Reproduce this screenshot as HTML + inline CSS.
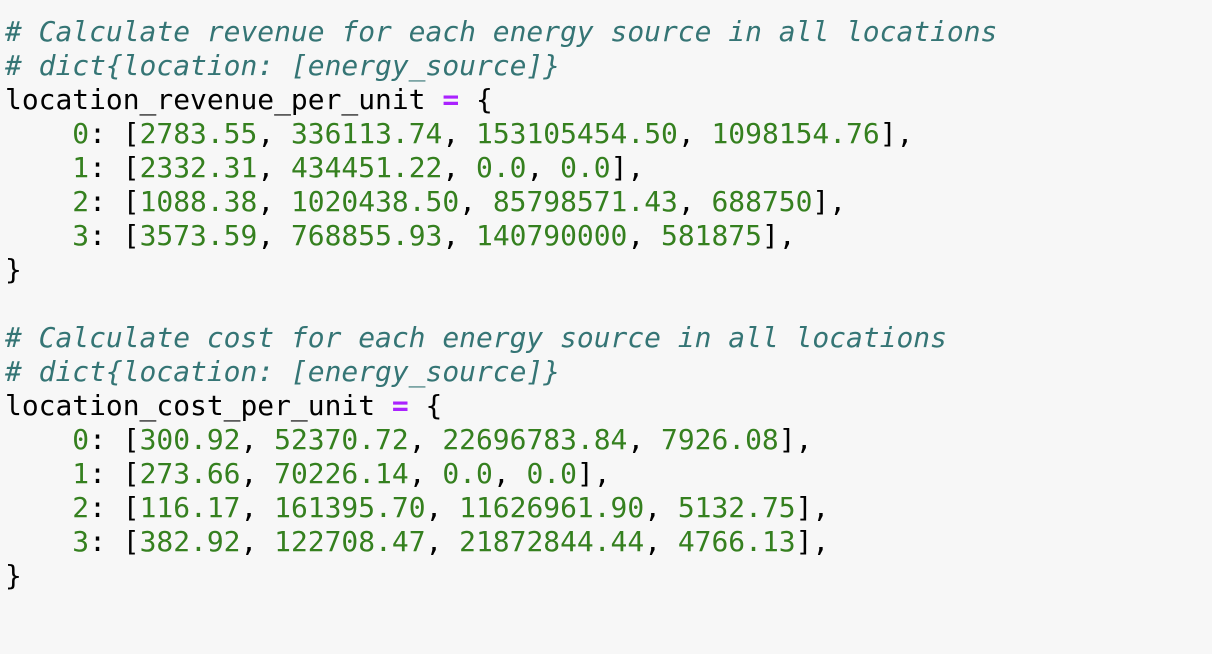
<!DOCTYPE html>
<html><head><meta charset="utf-8"><style>
html,body{margin:0;padding:0;background:#f7f7f7;width:1212px;height:654px;overflow:hidden}
pre{margin:0;position:absolute;left:5px;top:15px;font-family:"DejaVu Sans Mono","Liberation Mono",monospace;font-size:27.95px;line-height:34px;color:#000;letter-spacing:0}
.c{color:#357575;font-style:italic}
.n{color:#35801f}
.o{color:#aa22ff;font-weight:bold}
</style></head><body><pre><span class="c"># Calculate revenue for each energy source in all locations</span>
<span class="c"># dict{location: [energy_source]}</span>
location_revenue_per_unit <span class="o">=</span> {
    <span class="n">0</span>: [<span class="n">2783.55</span>, <span class="n">336113.74</span>, <span class="n">153105454.50</span>, <span class="n">1098154.76</span>],
    <span class="n">1</span>: [<span class="n">2332.31</span>, <span class="n">434451.22</span>, <span class="n">0.0</span>, <span class="n">0.0</span>],
    <span class="n">2</span>: [<span class="n">1088.38</span>, <span class="n">1020438.50</span>, <span class="n">85798571.43</span>, <span class="n">688750</span>],
    <span class="n">3</span>: [<span class="n">3573.59</span>, <span class="n">768855.93</span>, <span class="n">140790000</span>, <span class="n">581875</span>],
}

<span class="c"># Calculate cost for each energy source in all locations</span>
<span class="c"># dict{location: [energy_source]}</span>
location_cost_per_unit <span class="o">=</span> {
    <span class="n">0</span>: [<span class="n">300.92</span>, <span class="n">52370.72</span>, <span class="n">22696783.84</span>, <span class="n">7926.08</span>],
    <span class="n">1</span>: [<span class="n">273.66</span>, <span class="n">70226.14</span>, <span class="n">0.0</span>, <span class="n">0.0</span>],
    <span class="n">2</span>: [<span class="n">116.17</span>, <span class="n">161395.70</span>, <span class="n">11626961.90</span>, <span class="n">5132.75</span>],
    <span class="n">3</span>: [<span class="n">382.92</span>, <span class="n">122708.47</span>, <span class="n">21872844.44</span>, <span class="n">4766.13</span>],
}</pre></body></html>
